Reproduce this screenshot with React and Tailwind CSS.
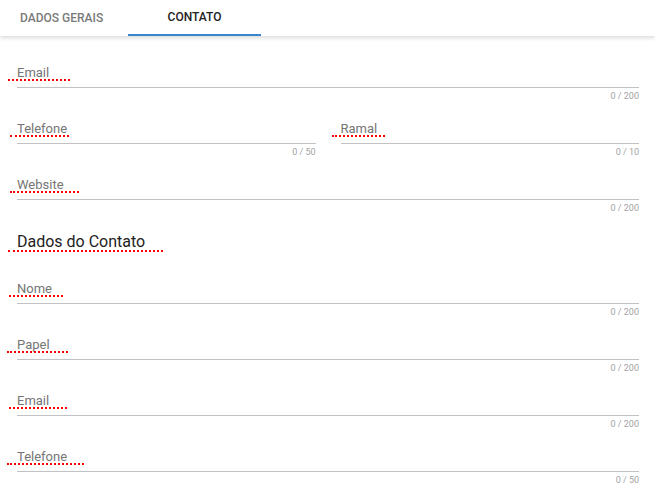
import React from "react";

const Squiggle = ({ left, width }) => (
    <span
        className="absolute top-[15px] h-[2px] border-b-2 border-dotted border-[#f00]"
        style={{ left, width }}
    ></span>
);

const Field = ({ label, max, dotLeft, dotWidth }) => (
    <div className="flex flex-col">
        <div className="relative h-[18px] text-[13px] leading-[18px] text-[#757575]">
            {label}
            <Squiggle left={dotLeft} width={dotWidth} />
        </div>
        <div className="mt-[5px] border-b border-[#c2c2c2]"></div>
        <div className="mt-[2px] text-right text-[9px] leading-[12px] text-[#a3a3a3]">
            0 / {max}
        </div>
    </div>
);

const App = () => {
    return (
        <div className="min-h-[498px] w-[655px] bg-white font-['Roboto',sans-serif]">
            <div className="relative z-10 flex h-[36px] bg-white shadow-[0_2px_4px_rgba(0,0,0,0.14)]">
                <div className="flex w-[128px] items-center pl-5 text-[12px] font-medium text-[#7a7a7a]">
                    DADOS GERAIS
                </div>
                <div className="flex w-[133px] items-center justify-center border-b-2 border-[#3a86cc] text-[12px] font-medium text-[#222]">
                    CONTATO
                </div>
            </div>

            <main className="flex flex-col gap-[18px] pl-[17px] pr-[16px] pt-[28px]">
                <Field label="Email" max="200" dotLeft={-9} dotWidth={62} />
                <div className="grid grid-cols-2 gap-[25px]">
                    <Field label="Telefone" max="50" dotLeft={-7} dotWidth={59} />
                    <Field label="Ramal" max="10" dotLeft={-9} dotWidth={53} />
                </div>
                <Field label="Website" max="200" dotLeft={-7} dotWidth={69} />

                <h2 className="relative mb-[10px] h-[20px] text-[16px] leading-[20px] text-[#222]">
                    Dados do Contato
                    <span className="absolute left-[-9px] top-[18px] h-[2px] w-[155px] border-b-2 border-dotted border-[#f00]"></span>
                </h2>

                <Field label="Nome" max="200" dotLeft={-8} dotWidth={54} />
                <Field label="Papel" max="200" dotLeft={-10} dotWidth={61} />
                <Field label="Email" max="200" dotLeft={-8} dotWidth={58} />
                <Field label="Telefone" max="50" dotLeft={-10} dotWidth={77} />
            </main>
        </div>
    );
};

export default App;
